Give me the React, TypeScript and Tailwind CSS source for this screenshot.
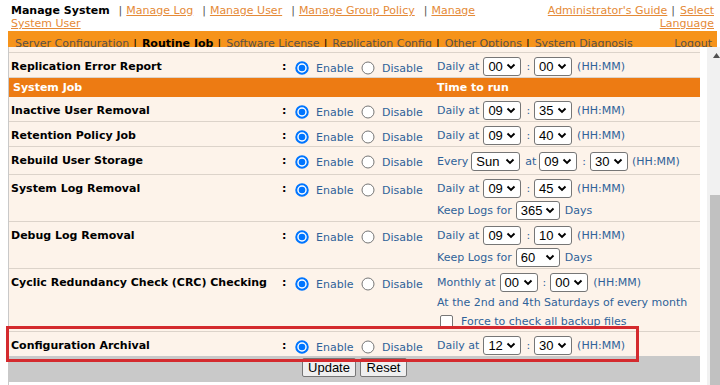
import React from "react";

function Radio({ checked }: { checked?: boolean }) {
  return checked ? (
    <svg width="14" height="14" viewBox="0 0 14 14" className="shrink-0">
      <circle cx="7" cy="7" r="5.75" fill="white" stroke="#0075ff" strokeWidth="2" />
      <circle cx="7" cy="7" r="3.3" fill="#0075ff" />
    </svg>
  ) : (
    <svg width="14" height="14" viewBox="0 0 14 14" className="shrink-0">
      <circle cx="7" cy="7" r="6" fill="white" stroke="#767676" strokeWidth="1" />
    </svg>
  );
}

function Sel({ v, className }: { v: string; className: string }) {
  return (
    <div
      className={`flex items-center justify-between rounded-[3px] border border-[#767676] bg-white pl-[4px] pr-[4px] font-['Liberation_Sans',Arial,sans-serif] text-[13px] leading-none text-black ${className}`}
    >
      <span>{v}</span>
      <svg width="10" height="7" viewBox="0 0 10 7">
        <path d="M1.5 1.5 5 5l3.5-3.5" fill="none" stroke="#000" strokeWidth="1.9" />
      </svg>
    </div>
  );
}

function Line({ children, h = "h-[22px]" }: { children: React.ReactNode; h?: string }) {
  return <div className={`flex items-center ${h}`}>{children}</div>;
}

function Daily({ hh, mm, word = "Daily at" }: { hh: string; mm: string; word?: string }) {
  return (
    <Line>
      <span>{word}</span>
      <Sel v={hh} className="ml-[4px] h-[19px] w-[38px]" />
      <span className="ml-[5px] mr-[4px]">:</span>
      <Sel v={mm} className="h-[19px] w-[38px]" />
      <span className="ml-[5px]">(HH:MM)</span>
    </Line>
  );
}

function Keep({ d }: { d: string }) {
  return (
    <Line>
      <span>Keep Logs for</span>
      <Sel v={d} className="ml-[4px] h-[19px] w-[44px]" />
      <span className="ml-[5px]">Days</span>
    </Line>
  );
}

function Row({ label, last, children }: { label: string; last?: boolean; children: React.ReactNode }) {
  return (
    <div className={`flex pt-[2px] ${last ? "" : "border-b border-[#dcd3ca]"}`}>
      <div className="flex h-[22px] w-[273px] items-center pl-[2px] font-bold text-black">{label}</div>
      <div className="flex h-[22px] w-[13px] items-center font-bold text-black">:</div>
      <div className="flex h-[22px] w-[142px] items-center pt-[3px] text-[#2f6299]">
        <span className="flex w-[66px] items-center">
          <Radio checked />
          <span className="ml-[7px] mt-[2px]">Enable</span>
        </span>
        <Radio />
        <span className="ml-[7px] mt-[2px]">Disable</span>
      </div>
      <div className="flex flex-col text-[#2f6299]">{children}</div>
    </div>
  );
}

function Sep({ cls = "ml-[4px] mr-[5px] text-[#555]" }: { cls?: string }) {
  return <span className={cls}>|</span>;
}

export default function App() {
  return (
    <div className="relative h-[385px] w-[720px] overflow-hidden bg-white font-['DejaVu_Sans',Verdana,sans-serif] text-[11px] leading-[13px]">
      {/* header */}
      <div className="flex h-[31px] justify-between pl-[11px] pr-[6px] pt-[4px]">
        <div className="flex flex-col">
          <div className="flex">
            <span className="font-bold text-black">Manage System</span>
            <Sep cls="ml-[9px] mr-[4px] text-[#555]" />
            <span className="text-[#e58a37] underline">Manage Log</span>
            <Sep cls="ml-[9px] mr-[4px] text-[#555]" />
            <span className="text-[#e58a37] underline">Manage User</span>
            <Sep cls="ml-[9px] mr-[4px] text-[#555]" />
            <span className="text-[#e58a37] underline">Manage Group Policy</span>
            <Sep cls="ml-[9px] mr-[4px] text-[#555]" />
            <span className="text-[#e58a37] underline">Manage</span>
          </div>
          <div className="flex">
            <span className="text-[#e58a37] underline">System User</span>
          </div>
        </div>
        <div className="flex flex-col items-end">
          <div className="flex">
            <span className="text-[#e58a37] underline">Administrator's Guide</span>
            <Sep />
            <span className="text-[#e58a37] underline">Select</span>
          </div>
          <span className="text-[#e58a37] underline">Language</span>
        </div>
      </div>

      {/* orange nav bar */}
      <div className="ml-[8px] flex h-[16px] w-[709px] justify-between overflow-hidden bg-[#f6931a] pl-[7px] pr-[5px] pt-[6px]">
        <div className="flex text-[#5a5148]">
          <span>Server Configuration</span>
          <Sep cls="ml-[4px] mr-[5px] text-black" />
          <span className="font-bold text-black">Routine Job</span>
          <Sep cls="ml-[4px] mr-[5px] text-black" />
          <span>Software License</span>
          <Sep cls="ml-[4px] mr-[5px] text-black" />
          <span>Replication Config</span>
          <Sep cls="ml-[4px] mr-[5px] text-black" />
          <span>Other Options</span>
          <Sep cls="ml-[4px] mr-[5px] text-black" />
          <span>System Diagnosis</span>
        </div>
        <span className="text-[#5a5148]">Logout</span>
      </div>

      {/* content frame */}
      <div className="flex h-[338px]">
        <div className="ml-[8px] flex w-[692px] flex-col border-l border-[#c9c9c9] bg-white">
          <div className="bg-[#fdf3ea]">
            <div className="h-[6px] border-b border-[#dcd3ca]" />
            <Row label="Replication Error Report">
              <Daily hh="00" mm="00" />
            </Row>
            <div className="flex h-[19px] items-center bg-[#ed7b13] font-bold text-white">
              <span className="w-[428px] pl-[4px]">System Job</span>
              <span>Time to run</span>
            </div>
            <Row label="Inactive User Removal">
              <Daily hh="09" mm="35" />
            </Row>
            <Row label="Retention Policy Job">
              <Daily hh="09" mm="40" />
            </Row>
            <Row label="Rebuild User Storage">
              <Line h="h-[25px]">
                <span>Every</span>
                <Sel v="Sun" className="ml-[3px] h-[19px] w-[49px]" />
                <span className="ml-[5px]">at</span>
                <Sel v="09" className="ml-[3px] h-[19px] w-[38px]" />
                <span className="ml-[5px] mr-[4px]">:</span>
                <Sel v="30" className="h-[19px] w-[38px]" />
                <span className="ml-[4px]">(HH:MM)</span>
              </Line>
            </Row>
            <Row label="System Log Removal">
              <Daily hh="09" mm="45" />
              <Keep d="365" />
            </Row>
            <Row label="Debug Log Removal">
              <Daily hh="09" mm="10" />
              <Keep d="60" />
            </Row>
            <Row label="Cyclic Redundancy Check (CRC) Checking">
              <Daily hh="00" mm="00" word="Monthly at" />
              <Line h="h-[18px]">
                <span>At the 2nd and 4th Saturdays of every month</span>
              </Line>
              <Line h="h-[20px]">
                <span className="ml-[3px] h-[13px] w-[13px] rounded-[2px] border border-[#767676] bg-white" />
                <span className="ml-[8px]">Force to check all backup files</span>
              </Line>
            </Row>
            <Row label="Configuration Archival" last>
              <Daily hh="12" mm="30" />
            </Row>
          </div>
          <div className="flex h-[26px] gap-[4px] bg-[#c9c9c9] pl-[293px] pt-[2px]">
            <button className="h-[19px] w-[54px] rounded-[2px] border border-[#767676] bg-[#efefef] font-['Liberation_Sans',Arial,sans-serif] text-[13px] leading-none text-black">
              Update
            </button>
            <button className="h-[19px] w-[47px] rounded-[2px] border border-[#767676] bg-[#efefef] font-['Liberation_Sans',Arial,sans-serif] text-[13px] leading-none text-black">
              Reset
            </button>
          </div>
          <div className="flex-1 bg-white" />
        </div>
        <div className="w-[7px]" />
        <div className="flex w-[13px] flex-col bg-[#f1f1f1]">
          <div className="flex h-[148px] justify-start pl-[6px] pt-[6px]">
            <svg width="7" height="5" viewBox="0 0 7 5">
              <path d="M3.5 0 7 5H0z" fill="#505050" />
            </svg>
          </div>
          <div className="ml-[3px] flex-1 bg-[#c1c1c1]" />
        </div>
      </div>

      {/* highlight annotation */}
      <div className="absolute left-[6px] top-[326px] h-[36px] w-[633px] border-[3px] border-[#d42a2e]" />
    </div>
  );
}
